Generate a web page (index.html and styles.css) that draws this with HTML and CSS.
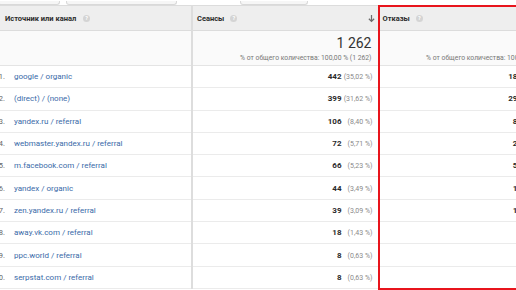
FILE: index.html
```html
<!DOCTYPE html>
<html lang="ru">
<head>
<meta charset="utf-8">
<link rel="stylesheet" href="styles.css">
</head>
<body>
<div class="page">
  <div class="toolbar">
    <div class="tab tab-a"></div>
    <div class="tab tab-b"></div>
    <div class="tab tab-c"></div>
  </div>
  <div class="report">
    <table class="grid">
      <colgroup>
        <col class="c-dim">
        <col class="c-m1">
        <col class="c-m2">
      </colgroup>
      <thead>
        <tr class="head">
          <th class="h-dim"><span class="h-label">Источник или канал</span><span class="help">?</span></th>
          <th class="h-metric"><div class="h-wrap"><span class="h-label">Сеансы</span><span class="help">?</span><svg class="sort" viewBox="0 0 8 9" width="7" height="9"><path d="M4 0.5V7.5M1 4.8L4 7.8L7 4.8" fill="none" stroke="#6b6b6b" stroke-width="1.4"/></svg></div></th>
          <th class="h-metric h-last"><div class="h-wrap"><span class="h-label">Отказы</span><span class="help">?</span></div></th>
        </tr>
        <tr class="total">
          <td class="t-dim"></td>
          <td class="t-metric"><div class="big">1 262</div><div class="share">% от общего количества: 100,00 % (1 262)</div></td>
          <td class="t-metric t-last"><div class="big">680</div><div class="share">% от общего количества: 100,00 % (680)</div></td>
        </tr>
      </thead>
      <tbody>
        <tr><td class="d"><span class="n">1.</span><a class="lnk">google / organic</a></td><td class="m"><b>442</b><span class="p">(35,02 %)</span></td><td class="m m-last"><b>183</b><span class="p">(26,91 %)</span></td></tr>
        <tr><td class="d"><span class="n">2.</span><a class="lnk">(direct) / (none)</a></td><td class="m"><b>399</b><span class="p">(31,62 %)</span></td><td class="m m-last"><b>293</b><span class="p">(43,09 %)</span></td></tr>
        <tr><td class="d"><span class="n">3.</span><a class="lnk">yandex.ru / referral</a></td><td class="m"><b>106</b><span class="p">(8,40 %)</span></td><td class="m m-last"><b>84</b><span class="p">(12,35 %)</span></td></tr>
        <tr><td class="d"><span class="n">4.</span><a class="lnk">webmaster.yandex.ru / referral</a></td><td class="m"><b>72</b><span class="p">(5,71 %)</span></td><td class="m m-last"><b>27</b><span class="p">(3,97 %)</span></td></tr>
        <tr><td class="d"><span class="n">5.</span><a class="lnk">m.facebook.com / referral</a></td><td class="m"><b>66</b><span class="p">(5,23 %)</span></td><td class="m m-last"><b>53</b><span class="p">(7,79 %)</span></td></tr>
        <tr><td class="d"><span class="n">6.</span><a class="lnk">yandex / organic</a></td><td class="m"><b>44</b><span class="p">(3,49 %)</span></td><td class="m m-last"><b>14</b><span class="p">(2,06 %)</span></td></tr>
        <tr><td class="d"><span class="n">7.</span><a class="lnk">zen.yandex.ru / referral</a></td><td class="m"><b>39</b><span class="p">(3,09 %)</span></td><td class="m m-last"><b>12</b><span class="p">(1,76 %)</span></td></tr>
        <tr><td class="d"><span class="n">8.</span><a class="lnk">away.vk.com / referral</a></td><td class="m"><b>18</b><span class="p">(1,43 %)</span></td><td class="m m-last"><b>7</b><span class="p">(1,03 %)</span></td></tr>
        <tr><td class="d"><span class="n">9.</span><a class="lnk">ppc.world / referral</a></td><td class="m"><b>8</b><span class="p">(0,63 %)</span></td><td class="m m-last"><b>3</b><span class="p">(0,44 %)</span></td></tr>
        <tr><td class="d"><span class="n">10.</span><a class="lnk">serpstat.com / referral</a></td><td class="m"><b>8</b><span class="p">(0,63 %)</span></td><td class="m m-last"><b>4</b><span class="p">(0,59 %)</span></td></tr>
      </tbody>
    </table>
    <div class="highlight"></div>
  </div>
</div>
</body>
</html>
```

FILE: styles.css
```css
html, body {
  margin: 0;
  padding: 0;
  background: #ffffff;
}
body {
  width: 516px;
  height: 290px;
  overflow: hidden;
  font-family: Roboto, "Liberation Sans", Arial, sans-serif;
  color: #333333;
}
.page {
  width: 600px;
}
.toolbar {
  height: 5px;
  display: flex;
  align-items: flex-end;
  background: #ffffff;
}
.tab {
  height: 4px;
  background: #f6f6f6;
  border: 1px solid #d9d9d9;
  border-top: none;
  border-radius: 0 0 3px 3px;
  box-sizing: border-box;
}
.tab-a { width: 62px; margin-left: -2px; }
.tab-b { width: 111px; margin-left: 6px; }
.tab-c { width: 68px; margin-left: 63px; }

.report {
  position: relative;
}
.grid {
  border-collapse: collapse;
  table-layout: fixed;
  width: 558px;
}
.c-dim { width: 192px; }
.c-m1 { width: 186px; }
.c-m2 { width: 180px; }

th, td {
  padding: 0;
  box-sizing: border-box;
}
.head th {
  height: 25px;
  background: #eeeeee;
  border-top: 1px solid #dcdcdc;
  border-bottom: 1px solid #dcdcdc;
  text-align: left;
  font-weight: 700;
  font-size: 7.5px;
  color: #2b2b2b;
  vertical-align: middle;
}
.h-dim {
  padding-left: 5px;
  border-right: 2px solid #dddddd;
}
.h-metric {
  padding-left: 4px;
  padding-right: 3px;
}
.h-last {
  border-left: 1px solid #dddddd;
}
.h-wrap {
  display: flex;
  align-items: center;
}
.help {
  display: inline-flex;
  align-items: center;
  justify-content: center;
  width: 7px;
  height: 7px;
  margin-left: 6px;
  border-radius: 50%;
  background: #d4d4d4;
  color: #ffffff;
  font-size: 5.5px;
  font-weight: 700;
  vertical-align: middle;
  line-height: 7px;
}
.h-dim .help { margin-left: 7px; }
.sort {
  margin-left: auto;
  display: block;
}

.total td {
  height: 35px;
  background: #fafafa;
  border-bottom: 1px solid #e4e4e4;
}
.t-dim {
  border-right: 2px solid #dddddd;
}
.t-metric {
  text-align: right;
  padding-right: 6px;
  vertical-align: top;
}
.t-last {
  border-left: 1px solid #dddddd;
}
.big {
  font-size: 14px;
  line-height: 14px;
  color: #333333;
  margin-top: 5px;
}
.share {
  font-size: 6.8px;
  color: #777777;
  margin-top: 4px;
  line-height: 8px;
}

tbody td {
  height: 22.3px;
  border-bottom: 1px solid #ebebeb;
  font-size: 8px;
  vertical-align: middle;
}
.d {
  border-right: 2px solid #dddddd;
  white-space: nowrap;
  overflow: hidden;
}
.n {
  display: inline-block;
  width: 12px;
  margin-left: -7px;
  text-align: right;
  color: #666666;
  font-size: 7.5px;
}
.lnk {
  margin-left: 9px;
  color: #3a6aa8;
  text-decoration: none;
  font-size: 8px;
}
.m {
  text-align: right;
  padding-right: 5px;
  white-space: nowrap;
}
.m-last {
  border-left: 1px solid #dddddd;
}
.m b {
  font-weight: 700;
  color: #2b2b2b;
  font-size: 8px;
}
.p {
  display: inline-block;
  width: 31px;
  text-align: right;
  color: #8a8a8a;
  font-size: 7px;
}
.highlight {
  position: absolute;
  left: 378px;
  top: 0;
  width: 300px;
  height: 285px;
  border: 2.5px solid #e8141c;
  border-top-width: 2px;
  border-bottom-width: 2px;
  box-sizing: border-box;
  pointer-events: none;
}
```
